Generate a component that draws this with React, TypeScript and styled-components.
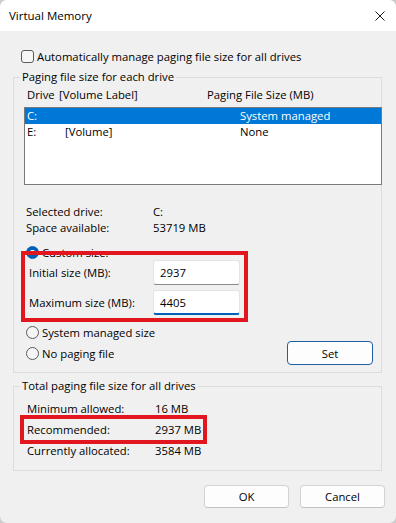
import React from "react";
import styled, { createGlobalStyle } from "styled-components";

const GlobalStyle = createGlobalStyle`
  html, body {
    margin: 0;
    padding: 0;
    background: #cdcdcd;
  }
  * {
    box-sizing: border-box;
  }
`;

export default function App() {
  return (
    <>
      <GlobalStyle />
      <Window>
        <TitleBar>
          <Title>Virtual Memory</Title>
          <svg width="10" height="10" viewBox="0 0 10 10">
            <path d="M0.5 0.5 L9.5 9.5 M9.5 0.5 L0.5 9.5" stroke="#1b1b1b" strokeWidth="1" />
          </svg>
        </TitleBar>
        <Body>
          <CheckRow>
            <CheckBox />
            <span>Automatically manage paging file size for all drives</span>
          </CheckRow>

          <Group $pl={11} $pb={7}>
            <Legend $pl={11}>Paging file size for each drive</Legend>
            <HeaderRow>
              <span>Drive</span>
              <span>[Volume Label]</span>
              <span>Paging File Size (MB)</span>
            </HeaderRow>
            <ListBox>
              <ListRow $selected>
                <span>C:</span>
                <span></span>
                <span>System managed</span>
              </ListRow>
              <ListRow>
                <span>E:</span>
                <span>[Volume]</span>
                <span>None</span>
              </ListRow>
            </ListBox>
            <InfoGrid>
              <span>Selected drive:</span>
              <span>C:</span>
              <span>Space available:</span>
              <span>53719 MB</span>
            </InfoGrid>

            <SizeBlock>
              <RadioRow $h={15}>
                <Radio $checked />
                <span>Custom size:</span>
              </RadioRow>
              <FieldRow>
                <FieldLabel>Initial size (MB):</FieldLabel>
                <TextBox>2937</TextBox>
              </FieldRow>
              <FieldRow $gap={5}>
                <FieldLabel>Maximum size (MB):</FieldLabel>
                <TextBox $focused>4405</TextBox>
              </FieldRow>
              <Highlight $left={-4} $top={6} $w={227} $h={71} />
            </SizeBlock>

            <RadioRow $h={16} $gap={9}>
              <Radio />
              <span>System managed size</span>
            </RadioRow>
            <BottomRow>
              <RadioRow $h={16}>
                <Radio />
                <span>No paging file</span>
              </RadioRow>
              <Button $width={86} $default>Set</Button>
            </BottomRow>
          </Group>

          <Group $pl={13} $pb={9} $mt={5}>
            <Legend $pl={13}>Total paging file size for all drives</Legend>
            <Stats>
              <StatRow>
                <span>Minimum allowed:</span>
                <span>16 MB</span>
              </StatRow>
              <StatRow>
                <span>Recommended:</span>
                <span>2937 MB</span>
                <Highlight $left={-7} $top={-4} $w={187} $h={29} />
              </StatRow>
              <StatRow>
                <span>Currently allocated:</span>
                <span>3584 MB</span>
              </StatRow>
            </Stats>
          </Group>
        </Body>
        <Footer>
          <Button $width={85}>OK</Button>
          <Button $width={85}>Cancel</Button>
        </Footer>
      </Window>
    </>
  );
}

const Window = styled.div`
  width: 396px;
  height: 523px;
  background: #f0f0f0;
  border-radius: 7px;
  overflow: hidden;
  font-family: "Open Sans", "Noto Sans", sans-serif;
  font-size: 11.3px;
  color: #000;
  display: flex;
  flex-direction: column;
`;
const TitleBar = styled.div`
  height: 31px;
  flex-shrink: 0;
  background: #fff;
  display: flex;
  align-items: center;
  justify-content: space-between;
  padding: 0 11px 0 9px;

  svg {
    display: block;
  }
`;
const Title = styled.span`
  font-size: 11.5px;
`;
const Body = styled.div`
  padding: 18px 14px 0 13px;
`;
const CheckRow = styled.div`
  display: flex;
  align-items: center;
  gap: 3px;
  height: 14px;
  margin-left: 8px;
`;
const CheckBox = styled.span`
  width: 13px;
  height: 13px;
  border: 1px solid #5c5c5c;
  border-radius: 3px;
  background: #f7f7f7;
`;
const Group = styled.fieldset<{ $pl: number; $pb: number; $mt?: number }>`
  margin: ${({ $mt }) => $mt ?? 6}px 0 0;
  padding: 0 0 ${({ $pb }) => $pb}px ${({ $pl }) => $pl}px;
  border: 1px solid #dcdcdc;
  min-width: 0;
`;
// the legend sits after the fieldset's left padding, so pull it back
const Legend = styled.legend<{ $pl: number }>`
  padding: 0 2px;
  margin-left: ${({ $pl }) => 6 - $pl}px;
  line-height: 16px;
`;
const HeaderRow = styled.div`
  display: grid;
  grid-template-columns: 32px 148px auto;
  line-height: 16px;
  margin-top: 2px;
  padding-left: 2px;
`;
const ListBox = styled.div`
  width: 358px;
  height: 78px;
  margin: 4px 0 0 -1px;
  background: #fff;
  border: 1px solid #7a7a7a;
`;
const ListRow = styled.div<{ $selected?: boolean }>`
  display: grid;
  grid-template-columns: 38px 175px auto;
  height: 16px;
  line-height: 16px;
  padding-left: 2px;
  background: ${({ $selected }) => ($selected ? "#0078d7" : "transparent")};
  color: ${({ $selected }) => ($selected ? "#fff" : "#000")};
`;
const InfoGrid = styled.div`
  display: grid;
  grid-template-columns: 127px auto;
  line-height: 16px;
  margin-top: 19px;
  padding-left: 1px;
`;
const SizeBlock = styled.div`
  position: relative;
  margin-top: 9px;
`;
const RadioRow = styled.div<{ $h: number; $gap?: number }>`
  display: flex;
  align-items: center;
  gap: 3px;
  height: ${({ $h }) => $h}px;
  margin-top: ${({ $gap }) => $gap ?? 0}px;
  padding-left: 1px;
`;
const Radio = styled.span<{ $checked?: boolean }>`
  width: 13px;
  height: 13px;
  border-radius: 50%;
  flex-shrink: 0;
  border: 1px solid ${({ $checked }) => ($checked ? "#005fb8" : "#5c5c5c")};
  background: ${({ $checked }) =>
    $checked ? "radial-gradient(circle, #fff 0 2.5px, #005fb8 3px)" : "#f5f5f5"};
`;
const FieldRow = styled.div<{ $gap?: number }>`
  display: grid;
  grid-template-columns: 128px 87px;
  align-items: center;
  height: 25px;
  margin-top: ${({ $gap }) => $gap ?? 0}px;
`;
const FieldLabel = styled.span`
  padding-left: 4px;
`;
const TextBox = styled.div<{ $focused?: boolean }>`
  height: 25px;
  display: flex;
  align-items: center;
  padding-left: 6px;
  background: #fff;
  border: 1px solid #e3e3e3;
  border-bottom: ${({ $focused }) => ($focused ? "2px solid #005fb8" : "1px solid #8a8a8a")};
  border-radius: 3px;
`;
const Highlight = styled.div<{ $left: number; $top: number; $w: number; $h: number }>`
  position: absolute;
  left: ${({ $left }) => $left}px;
  top: ${({ $top }) => $top}px;
  width: ${({ $w }) => $w}px;
  height: ${({ $h }) => $h}px;
  border: 4px solid #e2161f;
  pointer-events: none;
`;
const BottomRow = styled.div`
  display: flex;
  align-items: center;
  justify-content: space-between;
  height: 24px;
  margin-top: 1px;
  padding-right: 8px;
`;
const Button = styled.button<{ $width: number; $default?: boolean }>`
  width: ${({ $width }) => $width}px;
  height: ${({ $default }) => ($default ? 24 : 23)}px;
  padding: 0;
  font: inherit;
  color: #000;
  background: #fdfdfd;
  border: 1px solid ${({ $default }) => ($default ? "#1d5fa3" : "#d3d3d3")};
  border-bottom-color: ${({ $default }) => ($default ? "#1d5fa3" : "#c2c2c2")};
  border-radius: 4px;
`;
const Stats = styled.div`
  padding-top: 4px;
`;
const StatRow = styled.div`
  position: relative;
  display: grid;
  grid-template-columns: 128px auto;
  align-items: center;
  height: 21px;
`;
const Footer = styled.div`
  display: flex;
  justify-content: flex-end;
  gap: 11px;
  margin-top: 14px;
  padding-right: 11px;
`;
